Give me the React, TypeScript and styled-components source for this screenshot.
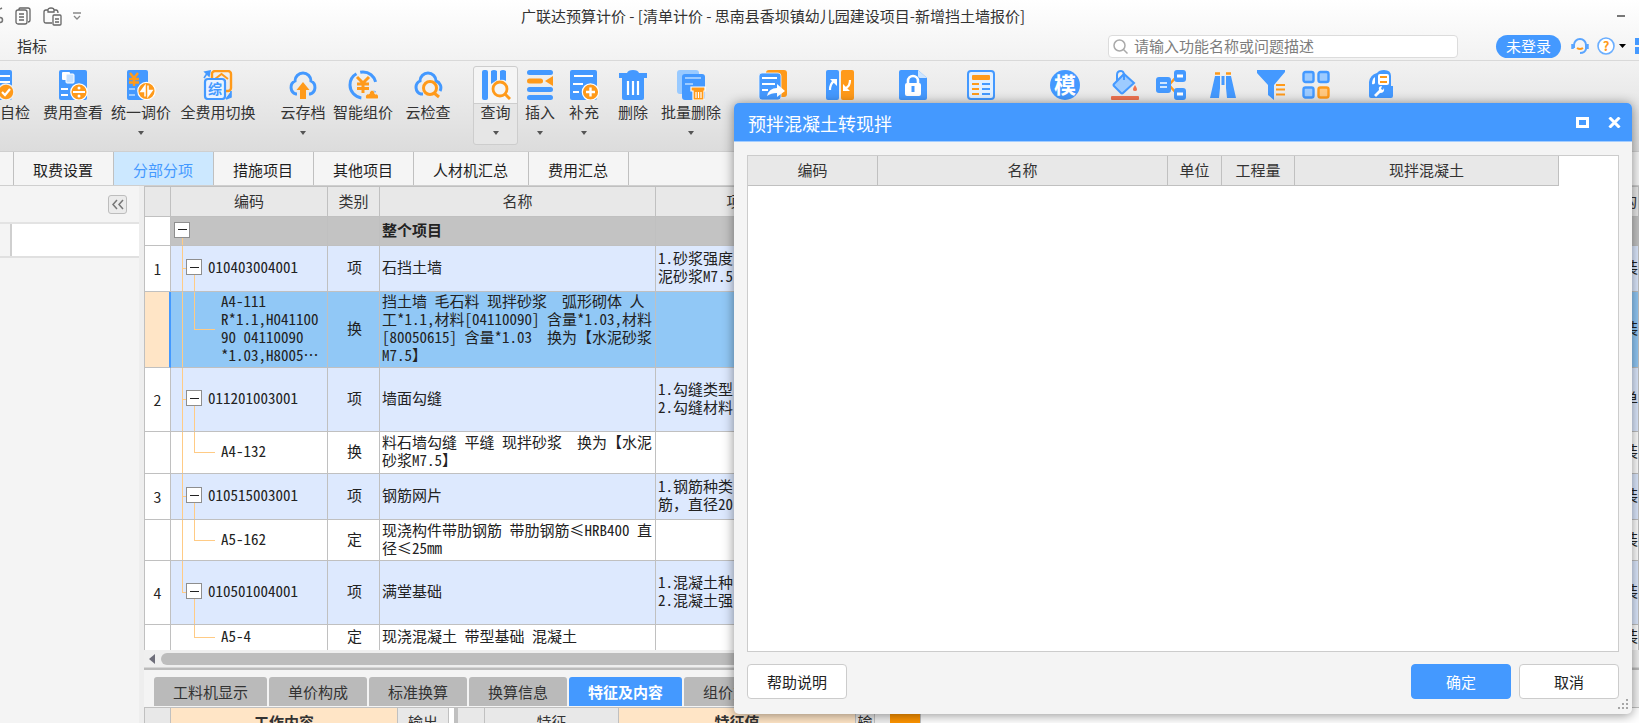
import React from "react";
import styled, { createGlobalStyle, css } from "styled-components";

const BLUE = "#4499ff";
const ORANGE = "#ff9a1a";
const LINE = "#c0c0c0";
const TREE = "#ffcb85";

const GlobalStyle = createGlobalStyle`
  * { box-sizing: border-box; }
  body {
    margin: 0;
    background: #f4f4f4;
    color: #333;
    font-family: "Noto Sans CJK SC", "Liberation Sans", sans-serif;
    font-size: 15px;
    line-height: 20px;
  }
  button, input { font: inherit; color: inherit; }
  button { padding: 0; margin: 0; border: 0; background: none; white-space: nowrap; }
`;

/* ---------- window frame ---------- */

const Window = styled.div`
  position: relative;
  display: flex;
  flex-direction: column;
  height: 100vh;
  overflow: hidden;
`;

const TopArea = styled.header`
  flex: none;
  background: linear-gradient(#ffffff, #f2f2f2);
  border-bottom: 1px solid #d9d9d9;
`;

const TitleRow = styled.div`
  display: flex;
  align-items: center;
  height: 32px;
`;

const QuickTools = styled.div`
  display: flex;
  align-items: center;
  gap: 11px;
  width: 90px;
`;

const PlainButton = styled.button`
  display: flex;
  flex: none;
`;

const WindowTitle = styled.h1`
  flex: 1;
  margin: 0;
  font-size: 15px;
  font-weight: 400;
  text-align: center;
  white-space: nowrap;
`;

const WindowButtons = styled.div`
  display: flex;
  justify-content: flex-end;
  width: 183px;
  padding-right: 14px;
`;

const MenuRow = styled.div`
  display: flex;
  align-items: center;
  height: 28px;
  padding-left: 17px;
`;

const MenuLink = styled.a`
  margin-right: auto;
  color: #333;
  text-decoration: none;
`;

const SearchBox = styled.label`
  display: flex;
  align-items: center;
  gap: 6px;
  width: 350px;
  height: 23px;
  margin-right: 38px;
  padding: 0 4px;
  background: #fff;
  border: 1px solid #dcdcdc;
  border-radius: 4px;
`;

const SearchInput = styled.input`
  flex: 1;
  min-width: 0;
  height: 20px;
  padding: 0;
  border: 0;
  outline: 0;
  background: none;
  &::placeholder { color: #7d7d7d; opacity: 1; }
`;

const LoginButton = styled.button`
  width: 65px;
  height: 23px;
  margin-right: 10px;
  border-radius: 12px;
  background: ${BLUE};
  color: #fff;
`;

const HelpTools = styled.div`
  display: flex;
  align-items: center;
  gap: 8px;
  width: 68px;
  overflow: hidden;
`;

const HelpMenu = styled.svg`
  flex: none;
  margin-left: -4px;
`;

/* ---------- ribbon ---------- */

const Ribbon = styled.nav`
  display: flex;
  flex: none;
  align-items: flex-start;
  height: 91px;
  padding-top: 5px;
  overflow: hidden;
  background: linear-gradient(#f2f2f2, #dcdcdc);
  border-bottom: 1px solid #cfcfcf;
`;

const RibbonButton = styled.button<{ $width: number; $before: number; $framed?: boolean }>`
  display: flex;
  flex: none;
  flex-direction: column;
  align-items: center;
  width: ${(p) => p.$width}px;
  height: 79px;
  margin-left: ${(p) => p.$before}px;
  border: 1px solid transparent;
  border-radius: 3px;
  ${(p) =>
    p.$framed &&
    css`
      border-color: #cdcdcd;
      background: linear-gradient(#f5f5f5 36px, #cdcdcd 36px, #cdcdcd 37px, #e6e6e6 37px);
    `}
`;

const RibbonIcon = styled.svg`
  flex: none;
  width: 30px;
  height: 30px;
  margin: 3px 0 2px;
`;

const Caret = styled.span`
  margin-top: 9px;
  border: 3px solid transparent;
  border-top: 4px solid #555;
  border-bottom: 0;
`;

/* ---------- page tabs ---------- */

const PageTabs = styled.div`
  display: flex;
  flex: none;
  height: 34px;
  background: #f5f5f5;
  border-bottom: 1px solid #cfcfcf;
`;

const PageTab = styled.button<{ $active?: boolean }>`
  padding: 2px 20px 0 19px;
  border-right: 1px solid ${LINE};
  background: ${(p) => (p.$active ? "#cce8ff" : "#f5f5f5")};
  color: ${(p) => (p.$active ? BLUE : "#1e1e1e")};
`;

const TabEdge = styled.div`
  width: 14px;
  border-right: 1px solid ${LINE};
`;

/* ---------- body ---------- */

const Workspace = styled.div`
  display: flex;
  flex: 1;
  min-height: 0;
`;

const SidePanel = styled.aside`
  flex: none;
  width: 144px;
  padding-right: 5px;
  background: linear-gradient(90deg, #f4f4f4 139px, #eeeeee 139px);
`;

const SideHead = styled.div`
  display: flex;
  justify-content: flex-end;
  height: 36px;
  padding: 9px 12px 0 0;
`;

const CollapseButton = styled.button`
  display: flex;
  align-items: center;
  justify-content: center;
  width: 19px;
  height: 19px;
  border: 1px solid #bdbdbd;
  border-radius: 3px;
  background: #ebebeb;
`;

const SideRow = styled.div`
  height: 36px;
  border-top: 2px solid #e3e3e3;
  border-bottom: 2px solid #e0e0e0;
  background: linear-gradient(90deg, #f4f4f4 10px, #cfcfcf 10px, #cfcfcf 12px, #ffffff 12px);
`;

const Main = styled.main`
  display: flex;
  flex: 1;
  flex-direction: column;
  min-width: 0;
`;

const Grid = styled.table`
  width: 100%;
  table-layout: fixed;
  border-collapse: separate;
  border-spacing: 0;
  border-top: 1px solid ${LINE};
  border-left: 1px solid ${LINE};
`;

const Th = styled.th<{ $strong?: boolean }>`
  height: 30px;
  padding: 0 0 1px;
  overflow: hidden;
  background: ${(p) => (p.$strong ? "#ffe5c6" : "#e8e8e8")};
  border-right: 1px solid ${LINE};
  border-bottom: 1px solid ${LINE};
  font-weight: ${(p) => (p.$strong ? 700 : 400)};
  white-space: nowrap;
`;

type Kind = "group" | "item" | "selected" | "sub";
const rowColor: Record<Kind, string> = {
  group: "#c3c3c3",
  item: "#dde9fe",
  selected: "#91c8f6",
  sub: "#ffffff",
};

const Row = styled.tr<{ $height: number; $kind: Kind; $last?: boolean }>`
  height: ${(p) => p.$height}px;
  background: ${(p) => rowColor[p.$kind]};
  td { border-bottom: ${(p) => (p.$last ? "0" : `1px solid ${LINE}`)}; }
`;

const Td = styled.td<{ $center?: boolean; $bold?: boolean }>`
  padding: 0 0 3px 2px;
  overflow: hidden;
  border-right: 1px solid ${LINE};
  color: #222;
  font-feature-settings: "hwid";
  font-weight: ${(p) => (p.$bold ? 700 : 400)};
  line-height: 18px;
  text-align: ${(p) => (p.$center ? "center" : "left")};
  white-space: pre;
`;

const FullWidth = styled.span`
  font-feature-settings: normal;
`;

const NumberCell = styled(Td)<{ $current?: boolean }>`
  padding: 0;
  background: ${(p) => (p.$current ? "#ffe5c6" : "#ffffff")};
  ${(p) => p.$current && css`border-right: 2px solid ${BLUE};`}
  font-feature-settings: normal;
  font-size: 14px;
  text-align: center;
`;

type Branch = "root" | "node" | "lastNode" | "leaf" | "lastLeaf";
const ink = `linear-gradient(${TREE}, ${TREE})`;
const trunk = `${ink} 11px 0 / 1px 100% no-repeat`;
const branchLines: Record<Branch, string> = {
  root: `${ink} 11px 100% / 1px 50% no-repeat`,
  node: `${trunk}, ${ink} 11px 50% / 6px 1px no-repeat, ${ink} 23px 100% / 1px 50% no-repeat`,
  lastNode: `${ink} 11px 0 / 1px 50% no-repeat, ${ink} 11px 50% / 6px 1px no-repeat, ${ink} 23px 100% / 1px 50% no-repeat`,
  leaf: `${trunk}, ${ink} 23px 0 / 1px 50% no-repeat, ${ink} 23px 50% / 21px 1px no-repeat`,
  lastLeaf: `${ink} 23px 0 / 1px 50% no-repeat, ${ink} 23px 50% / 21px 1px no-repeat`,
};
const indent: Record<Branch, number> = { root: 3, node: 15, lastNode: 15, leaf: 50, lastLeaf: 50 };

const TreeCell = styled(Td)<{ $branch: Branch }>`
  padding-left: ${(p) => indent[p.$branch]}px;
  background: ${(p) => branchLines[p.$branch]};
`;

const TreeContent = styled.div`
  display: flex;
  align-items: center;
  gap: 6px;
`;

const Toggle = styled.button`
  display: flex;
  flex: none;
  align-items: center;
  justify-content: center;
  width: 16px;
  height: 16px;
  border: 1px solid #8e8e8e;
  background: #fff;
  &::before { content: ""; width: 9px; height: 1px; background: #222; }
`;

const ScrollBar = styled.div`
  display: flex;
  flex: none;
  align-items: center;
  gap: 6px;
  height: 18px;
  padding: 0 20px 0 5px;
  background: #efefef;
  border-bottom: 1px solid #d6d6d6;
`;

const ArrowLeft = styled.span`
  border: 5px solid transparent;
  border-right: 6px solid #6e6e7a;
  border-left: 0;
`;

const Thumb = styled.div`
  flex: 1;
  height: 12px;
  border-radius: 6px;
  background: #bdbdbd;
`;

const DetailTabs = styled.div`
  display: flex;
  flex: none;
  gap: 2px;
  height: 40px;
  padding: 7px 0 1px 10px;
  border-top: 2px solid #bbbbbb;
  border-bottom: 1px solid ${LINE};
  background: #f4f4f4;
`;

const DetailTab = styled.button<{ $active?: boolean }>`
  padding: 0 19px;
  border-radius: 3px 3px 0 0;
  background: ${(p) => (p.$active ? BLUE : "#bababa")};
  color: ${(p) => (p.$active ? "#fff" : "#333")};
  font-weight: ${(p) => (p.$active ? 700 : 400)};
`;

const DetailPanes = styled.div`
  display: flex;
  flex: 1;
  min-height: 0;
  overflow: hidden;
  background: #fff;
`;

const DetailTable = styled.table<{ $width: number }>`
  flex: none;
  width: ${(p) => p.$width}px;
  height: 30px;
  table-layout: fixed;
  border-collapse: separate;
  border-spacing: 0;
  border-left: 1px solid ${LINE};
`;

const Splitter = styled.div`
  width: 8px;
  background: #fff;
  border-right: 3px solid ${LINE};
`;

const DetailMark = styled.div`
  width: 46px;
  border-left: 15px solid #f0f0f0;
  border-right: 1px solid ${LINE};
  background: #ff9500;
`;

/* ---------- dialog ---------- */

const Dialog = styled.section`
  position: absolute;
  top: 103px;
  right: 7px;
  bottom: 9px;
  left: 734px;
  display: flex;
  flex-direction: column;
  border-radius: 5px;
  background: #f4f4f4;
  box-shadow: 0 1px 12px rgba(0, 0, 0, 0.45);
`;

const DialogHead = styled.div`
  display: flex;
  flex: none;
  align-items: center;
  gap: 19px;
  height: 39px;
  padding: 0 11px 0 14px;
  border-radius: 5px 5px 0 0;
  border-bottom: 1px solid #a3cdff;
  background: ${BLUE};
  color: #fff;
`;

const DialogTitle = styled.h2`
  flex: 1;
  margin: 2px 0 0;
  font-size: 18px;
  font-weight: 400;
  line-height: 24px;
`;

const DialogBody = styled.div`
  display: flex;
  flex: 1;
  flex-direction: column;
  gap: 12px;
  min-height: 0;
  padding: 13px 13px 15px;
`;

const Frame = styled.div`
  flex: 1;
  min-height: 0;
  border: 1px solid #cccccc;
  background: #fff;
`;

const DialogTable = styled.table`
  width: 811px;
  table-layout: fixed;
  border-collapse: separate;
  border-spacing: 0;
`;

const DialogFoot = styled.div`
  display: flex;
  flex: none;
  gap: 8px;
`;

const DialogButton = styled.button<{ $primary?: boolean; $start?: boolean }>`
  width: 100px;
  height: 35px;
  margin-right: ${(p) => (p.$start ? "auto" : "0")};
  border: 1px solid ${(p) => (p.$primary ? BLUE : "#cccccc")};
  border-radius: 4px;
  background: ${(p) => (p.$primary ? BLUE : "#ffffff")};
  color: ${(p) => (p.$primary ? "#fff" : "#222")};
`;

const Grip = styled.svg`
  position: absolute;
  right: 3px;
  bottom: 4px;
`;

/* ---------- ribbon drawings ---------- */

const glyph = { fontFamily: '"Noto Sans CJK SC", sans-serif', fontWeight: 700, textAnchor: "middle" as const };

const icons: Record<string, React.ReactNode> = {
  selfCheck: (
    <>
      <rect x="1" width="26" height="30" rx="2" fill={BLUE} />
      <path d="M13 6h12M13 12h12" stroke="#fff" strokeWidth="2" />
      <circle cx="21" cy="22" r="8" fill={ORANGE} stroke="#f0f0f0" strokeWidth="1.5" />
      <path d="M17 22l3 3 5-6" fill="none" stroke="#fff" strokeWidth="2.2" />
    </>
  ),
  feeView: (
    <>
      <rect x="1" width="28" height="30" rx="2" fill={BLUE} />
      <rect x="4" y="2" width="8" height="8" rx="1" fill="#fff" />
      <rect x="8" y="4" width="8" height="9" rx="1" fill="#c4e0ff" stroke="#fff" />
      <path d="M3 19h7M3 25h7" stroke="#fff" strokeWidth="2" />
      <circle cx="21" cy="22" r="8.2" fill={ORANGE} stroke="#fff" strokeWidth="1.2" />
      <path d="M15 22h12" stroke="#fff" strokeWidth="2" />
      <circle cx="21" cy="18" r="1.5" fill="#fff" />
      <circle cx="21" cy="26" r="1.5" fill="#fff" />
    </>
  ),
  price: (
    <>
      <rect x="1" width="21" height="30" rx="2" fill={BLUE} />
      <path d="M4 3l4 5 4-5M8 8v8M3 9h10M3 12.500h10" fill="none" stroke={ORANGE} strokeWidth="2.400" />
      <path d="M3 19h6M3 25h6" stroke="#9dcbff" strokeWidth="2" />
      <circle cx="20.500" cy="21" r="8.700" fill={ORANGE} stroke="#fff" strokeWidth="1.200" />
      <path d="M19 15.500v11M19 16l-4 5.500h4zM22 15.500v11M22 26l4-5.500h-4z" stroke="#fff" strokeWidth="1.500" fill="#fff" />
    </>
  ),
  fullFee: (
    <>
      <rect x="9" y="1" width="19" height="20" rx="3" fill="none" stroke={ORANGE} strokeWidth="2.400" />
      <path d="M12 9l6.500-5L25 9M14 11h9M18.500 11v8" fill="none" stroke={ORANGE} strokeWidth="2" />
      <rect x="2" y="9" width="20" height="20" rx="3" fill="#eaf3ff" stroke={BLUE} strokeWidth="2.200" />
      <text x="12" y="24" fontSize="14" fill={BLUE} {...glyph}>综</text>
      <path d="M1 8l4-6M2 2l5-1-1 5zM23 29l5-6M28 21v6l-5 2" stroke={BLUE} strokeWidth="1.600" fill={BLUE} />
    </>
  ),
  cloudSave: (
    <>
      <path d="M9 25H8a7 7 0 0 1-1-13 8 8 0 0 1 16 0 7 7 0 0 1-1 13h-1" fill="none" stroke={BLUE} strokeWidth="3" transform="translate(0 -1)" />
      <path d="M15 12l6.500 8H18v9h-6v-9H8.500z" fill={ORANGE} />
    </>
  ),
  smartPrice: (
    <>
      <circle cx="15" cy="15" r="13" fill="none" stroke={BLUE} strokeWidth="3" strokeDasharray="0 6 10 6 32 4 20 4" />
      <path d="M9 7l6 6 6-6M15 13v10M9 14h12M9 18.500h12" fill="none" stroke={ORANGE} strokeWidth="3" />
      <path d="M18 29c-2-3 1-6 3-5 1-6 6-4 6 0 4-1 4 4 3 5z" fill={ORANGE} stroke="#f0f0f0" />
    </>
  ),
  cloudCheck: (
    <>
      <path d="M10 25H8a7 7 0 0 1-1-13 8 8 0 0 1 16 0 7 7 0 0 1 4 10" fill="none" stroke={BLUE} strokeWidth="3" transform="translate(0 -1)" />
      <circle cx="17" cy="18" r="6.500" fill="#f0f0f0" stroke={ORANGE} strokeWidth="3" />
      <path d="M21 23l5 4" stroke={ORANGE} strokeWidth="3" />
    </>
  ),
  query: (
    <>
      <rect x="1" width="6" height="30" rx="2" fill={BLUE} />
      <path d="M10 1q3-2 6 0v9l-6 4zM19 1q3-2 6 0v10q-3-2-6-1z" fill={BLUE} />
      <circle cx="19" cy="19" r="7" fill="#f5f5f5" stroke={ORANGE} strokeWidth="2.800" />
      <path d="M24 24l5 5" stroke={ORANGE} strokeWidth="3" />
    </>
  ),
  insert: (
    <>
      <path d="M4.500 2.500h21M4.500 19.500h21M4.500 27.500h21" stroke={BLUE} strokeWidth="5" strokeLinecap="round" />
      <path d="M4.500 11h11" stroke={ORANGE} strokeWidth="5" strokeLinecap="round" />
      <path d="M20 11l8-5v10z" fill={ORANGE} />
    </>
  ),
  supplement: (
    <>
      <rect x="1" width="27" height="30" rx="2" fill={BLUE} />
      <path d="M5 6h19M4 14h10M4 22h6" stroke="#fff" strokeWidth="2" />
      <circle cx="21.500" cy="22" r="8.200" fill={ORANGE} stroke="#fff" strokeWidth="1.200" />
      <path d="M17 22h9M21.500 17.500v9" stroke="#fff" strokeWidth="2.400" />
    </>
  ),
  trash: (
    <>
      <path d="M1 3h8q1-3 6-3t6 3h8v5H1z" fill={BLUE} />
      <path d="M4 7h22v21q0 2-2 2H6q-2 0-2-2z" fill={BLUE} />
      <path d="M10 11v14M15 11v14M20 11v14" stroke="#fff" strokeWidth="2.200" />
    </>
  ),
  batchTrash: (
    <>
      <rect x="1" width="22" height="24" rx="3" fill="#99caff" />
      <rect x="6" y="4" width="23" height="26" rx="3" fill={BLUE} />
      <path d="M9 8h16M9 14h8" stroke="#9dcbff" strokeWidth="2" />
      <path d="M15 17h14v4h-1v9H17v-9h-2z" fill={ORANGE} stroke="#fff" strokeWidth="1.200" />
      <path d="M20 22v6M22.500 22v6M25 22v6" stroke="#fff" strokeWidth="1.200" />
    </>
  ),
  share: (
    <>
      <rect x="8" width="21" height="27" rx="3" fill={ORANGE} />
      <rect x="1" y="3" width="22" height="27" rx="3" fill={BLUE} stroke="#e9f3ff" strokeWidth="0.800" />
      <path d="M4 8h15M4 14h13M4 20h6" stroke="#fff" strokeWidth="2" />
      <path d="M9 26q2-8 10-8v-4l8 7-8 6v-4q-6 0-10 3z" fill="#fff" />
    </>
  ),
  swap: (
    <>
      <rect x="1" width="13" height="30" rx="2" fill={BLUE} />
      <rect x="16" width="13" height="30" rx="2" fill={ORANGE} />
      <path d="M5 20q0-6 4-9M25 10q0 6-4 8" fill="none" stroke="#fff" strokeWidth="2.200" />
      <path d="M5 9h7v7zM18 14v7h7z" fill="#fff" />
    </>
  ),
  lock: (
    <>
      <path d="M1 2q0-2 2-2h17l9 8v20q0 2-2 2H3q-2 0-2-2z" fill={BLUE} />
      <path d="M20 0l9 8h-7q-2 0-2-2z" fill="#cfe6ff" />
      <path d="M10 14v-3a5 5 0 0 1 10 0v3" fill="none" stroke="#fff" strokeWidth="2.600" />
      <rect x="7" y="13" width="16" height="13" rx="2" fill="#fff" />
      <path d="M15 16v6" stroke={BLUE} strokeWidth="3" />
    </>
  ),
  sheet: (
    <>
      <rect x="2" y="1" width="26" height="28" rx="3" fill="#e2f0ff" stroke={BLUE} strokeWidth="2" />
      <rect x="6" y="5" width="18" height="5" rx="1" fill={ORANGE} />
      <path d="M6 14h7M6 19h7M6 24h7" stroke={ORANGE} strokeWidth="2.200" />
      <path d="M16 14h8M16 19h8M16 24h8" stroke={BLUE} strokeWidth="2.200" />
    </>
  ),
  mould: (
    <>
      <circle cx="15" cy="15" r="15" fill={BLUE} />
      <text x="15" y="23" fontSize="22" fill="#fff" {...glyph}>模</text>
    </>
  ),
  bucket: (
    <>
      <path d="M4 14L14 4l10 9-11 10q-1 1-2 0l-7-7q-1-1 0-2z" fill="#9dcbff" stroke={BLUE} strokeWidth="2" />
      <path d="M7 11V5q0-4 4-4 3 0 3 5v4" fill="none" stroke={BLUE} strokeWidth="2" />
      <path d="M25 15q4 6 0 6t0-6z" fill="#ef7350" />
      <rect x="1" y="26" width="28" height="4" rx="1" fill="#ef7350" />
    </>
  ),
  tree: (
    <>
      <path d="M13 15l8-9M13 15l8 9" stroke={ORANGE} strokeWidth="2.400" />
      <rect x="0" y="7" width="15" height="16" rx="3" fill={BLUE} />
      <path d="M4 13h7M4 17h7" stroke="#cfe6ff" strokeWidth="2" />
      <rect x="18" width="12" height="12" rx="3" fill={BLUE} />
      <rect x="18" y="18" width="12" height="12" rx="3" fill={BLUE} />
      <path d="M21 6h6M21 24h6" stroke="#fff" strokeWidth="3" />
    </>
  ),
  binoculars: (
    <>
      <path d="M7 6h5v12l-1 10H2zM18 6h5l5 22h-9l-1-10z" fill={BLUE} />
      <path d="M13.500 6h3v9h-3z" fill={BLUE} />
      <path d="M7 3.500h5M18 3.500h5" stroke={ORANGE} strokeWidth="2.600" />
    </>
  ),
  funnel: (
    <>
      <path d="M1 0h28v2L18 15v15l-6-5V15L1 3z" fill={BLUE} />
      <path d="M20 15h9M20 19.500h9M20 24.500h9" stroke={ORANGE} strokeWidth="2" />
    </>
  ),
  squares: (
    <>
      <g fill="#9dcbff" stroke={BLUE} strokeWidth="2.400">
        <rect x="2.500" y="2" width="10" height="10" rx="2" />
        <rect x="17.500" y="2" width="10" height="10" rx="2" />
        <rect x="2.500" y="17.500" width="10" height="10" rx="2" />
      </g>
      <rect x="17.500" y="17.500" width="10" height="10" rx="2" fill="#ffc880" stroke={ORANGE} strokeWidth="2.400" />
    </>
  ),
  toolbox: (
    <>
      <path d="M3 28V12Q4 5 11 3q2-3 7-3 7 0 7 6v10h2v10q0 2-2 2H5q-2 0-2-2z" fill={BLUE} />
      <rect x="12" y="4" width="11" height="11" rx="2" fill="#fff" />
      <path d="M14 7h7M14 12h7" stroke={ORANGE} strokeWidth="2.200" />
      <path d="M9 7v6q-1 2-3 1 0-5 3-7z" fill="#fff" />
      <path d="M8 25l5-5q-1-4 3-4l-1 3 2 1 1-2q1 5-4 5l-4 4z" fill="#fff" />
    </>
  ),
};

interface Command { icon: string; label?: string; width: number; before: number; menu?: boolean; framed?: boolean }
const commands: Command[] = [
  { icon: "selfCheck", label: "项目自检", width: 68, before: -34 },
  { icon: "feeView", label: "费用查看", width: 68, before: 5 },
  { icon: "price", label: "统一调价", width: 68, before: 0, menu: true },
  { icon: "fullFee", label: "全费用切换", width: 84, before: 1 },
  { icon: "cloudSave", label: "云存档", width: 52, before: 17, menu: true },
  { icon: "smartPrice", label: "智能组价", width: 68, before: 0 },
  { icon: "cloudCheck", label: "云检查", width: 52, before: 5 },
  { icon: "query", label: "查询", width: 45, before: 19, menu: true, framed: true },
  { icon: "insert", label: "插入", width: 40, before: 2, menu: true },
  { icon: "supplement", label: "补充", width: 40, before: 4, menu: true },
  { icon: "trash", label: "删除", width: 40, before: 9 },
  { icon: "batchTrash", label: "批量删除", width: 68, before: 4, menu: true },
  { icon: "share", width: 36, before: 30 },
  { icon: "swap", width: 36, before: 31 },
  { icon: "lock", width: 36, before: 37 },
  { icon: "sheet", width: 36, before: 32 },
  { icon: "mould", width: 36, before: 48 },
  { icon: "bucket", width: 36, before: 24 },
  { icon: "tree", width: 36, before: 10 },
  { icon: "binoculars", width: 36, before: 16 },
  { icon: "funnel", width: 36, before: 12 },
  { icon: "squares", width: 36, before: 9 },
  { icon: "toolbox", width: 36, before: 29 },
];

/* ---------- data ---------- */

interface Line { no?: string; kind: Kind; branch: Branch; code: string; type: string; name: string; feature?: React.ReactNode; extra: string; height: number }
const lines: Line[] = [
  { kind: "group", branch: "root", code: "", type: "", name: "整个项目", extra: "", height: 29 },
  { no: "1", kind: "item", branch: "node", code: "010403004001", type: "项", name: "石挡土墙", feature: "1.砂浆强度\n泥砂浆M7.5", extra: "装", height: 46 },
  { kind: "selected", branch: "leaf", code: "A4-111\nR*1.1,H041100\n90 04110090\n*1.03,H8005…", type: "换", name: "挡土墙 毛石料 现拌砂浆  弧形砌体 人\n工*1.1,材料[04110090] 含量*1.03,材料\n[80050615] 含量*1.03  换为【水泥砂浆\nM7.5】", extra: "装", height: 76 },
  { no: "2", kind: "item", branch: "node", code: "011201003001", type: "项", name: "墙面勾缝", feature: "1.勾缝类型\n2.勾缝材料", extra: "单", height: 64 },
  { kind: "sub", branch: "leaf", code: "A4-132", type: "换", name: "料石墙勾缝 平缝 现拌砂浆  换为【水泥\n砂浆M7.5】", extra: "装", height: 42 },
  { no: "3", kind: "item", branch: "node", code: "010515003001", type: "项", name: "钢筋网片", feature: <>{"1.钢筋种类\n筋"}<FullWidth>，</FullWidth>直径20</>, extra: "装", height: 46 },
  { kind: "sub", branch: "leaf", code: "A5-162", type: "定", name: "现浇构件带肋钢筋 带肋钢筋≤HRB400 直\n径≤25mm", extra: "装", height: 41 },
  { no: "4", kind: "item", branch: "lastNode", code: "010501004001", type: "项", name: "满堂基础", feature: "1.混凝土种\n2.混凝土强", extra: "装", height: 64 },
  { kind: "sub", branch: "lastLeaf", code: "A5-4", type: "定", name: "现浇混凝土 带型基础 混凝土", extra: "装", height: 25 },
];

const BillGrid = () => (
  <Grid>
    <colgroup>
      <col width="26" /><col width="157" /><col width="52" /><col width="276" /><col width="202" /><col /><col width="18" />
    </colgroup>
    <thead>
      <tr>
        <Th /><Th>编码</Th><Th>类别</Th><Th>名称</Th><Th>项目特征</Th><Th /><Th>构</Th>
      </tr>
    </thead>
    <tbody>
      {lines.map((l, i) => (
        <Row key={i} $height={l.height} $kind={l.kind} $last={i === lines.length - 1}>
          <NumberCell $current={l.kind === "selected"}>{l.no}</NumberCell>
          <TreeCell $branch={l.branch}>
            <TreeContent>
              {!l.branch.toLowerCase().endsWith("leaf") && <Toggle aria-label="折叠" />}
              {l.code}
            </TreeContent>
          </TreeCell>
          <Td $center>{l.type}</Td>
          <Td $bold={l.kind === "group"}>{l.name}</Td>
          <Td>{l.feature}</Td>
          <Td />
          <Td>{l.extra}</Td>
        </Row>
      ))}
    </tbody>
  </Grid>
);

const ConvertDialog = () => (
  <Dialog role="dialog" aria-labelledby="dialog-title">
    <DialogHead>
      <DialogTitle id="dialog-title">预拌混凝土转现拌</DialogTitle>
      <PlainButton aria-label="最大化">
        <svg width="13" height="11"><rect x="1.500" y="1.500" width="10" height="8" fill="none" stroke="#fff" strokeWidth="3" /></svg>
      </PlainButton>
      <PlainButton aria-label="关闭">
        <svg width="13" height="11"><path d="M1.500 0.500l10 10M11.500 0.500l-10 10" stroke="#fff" strokeWidth="3" /></svg>
      </PlainButton>
    </DialogHead>
    <DialogBody>
      <Frame>
        <DialogTable>
          <colgroup>
            <col width="130" /><col width="290" /><col width="54" /><col width="73" /><col width="264" />
          </colgroup>
          <thead>
            <tr><Th>编码</Th><Th>名称</Th><Th>单位</Th><Th>工程量</Th><Th>现拌混凝土</Th></tr>
          </thead>
        </DialogTable>
      </Frame>
      <DialogFoot>
        <DialogButton $start>帮助说明</DialogButton>
        <DialogButton $primary>确定</DialogButton>
        <DialogButton>取消</DialogButton>
      </DialogFoot>
    </DialogBody>
    <Grip width="11" height="11" fill="#a6a6a6">
      <path d="M8 0h2v2H8zM8 4h2v2H8zM8 8h2v2H8zM4 4h2v2H4zM4 8h2v2H4zM0 8h2v2H0z" />
    </Grip>
  </Dialog>
);

export default function App() {
  return (
    <Window lang="zh-CN">
      <GlobalStyle />
      <TopArea>
        <TitleRow>
          <QuickTools>
            <PlainButton aria-label="剪切">
              <svg width="4" height="20" fill="none" stroke="#777" strokeWidth="1.500"><path d="M0 3l2-1" /><circle cx="0" cy="14" r="2.500" /></svg>
            </PlainButton>
            <PlainButton aria-label="复制">
              <svg width="17" height="18" viewBox="0 0 17 18" fill="none" stroke="#666" strokeWidth="1.300">
                <path d="M4 3V2q0-1 1-1h8q2 0 2 2v10q0 2-2 2" /><rect x="1" y="3" width="11" height="14" rx="2" /><path d="M4 7h5M4 10h5M4 13h5" />
              </svg>
            </PlainButton>
            <PlainButton aria-label="粘贴">
              <svg width="19" height="19" viewBox="0 0 19 19" fill="none" stroke="#666" strokeWidth="1.300">
                <path d="M9 16H3q-2 0-2-2V5q0-2 2-2h2q0-2 3-2t3 2h2q2 0 2 3M5 3v2h6V3" /><rect x="10" y="8" width="8" height="10" rx="1" /><path d="M12 12h4M12 15h4" />
              </svg>
            </PlainButton>
            <PlainButton aria-label="自定义">
              <svg width="8" height="9" fill="none" stroke="#888" strokeWidth="1.300"><path d="M0 1h8M1 4l3 3 3-3" /></svg>
            </PlainButton>
          </QuickTools>
          <WindowTitle>广联达预算计价 - [清单计价 - 思南县香坝镇幼儿园建设项目-新增挡土墙报价]</WindowTitle>
          <WindowButtons>
            <PlainButton aria-label="最小化"><svg width="8" height="3"><rect width="8" height="2" fill="#777" /></svg></PlainButton>
          </WindowButtons>
        </TitleRow>
        <MenuRow>
          <MenuLink href="#index">指标</MenuLink>
          <SearchBox>
            <svg width="15" height="15" fill="none" stroke="#aaa" strokeWidth="1.500"><circle cx="6.500" cy="6.500" r="5.500" /><path d="M10.500 10.500l4 4" /></svg>
            <SearchInput type="text" aria-label="搜索" placeholder="请输入功能名称或问题描述" />
          </SearchBox>
          <LoginButton>未登录</LoginButton>
          <HelpTools>
            <PlainButton aria-label="客服">
              <svg width="18" height="18" fill="none" stroke="#5aa5ff" strokeWidth="2">
                <path d="M3 11V8a6 6 0 0 1 12 0v4q-1 4-6 4" /><path d="M1.500 7v5M16.500 7v5" strokeWidth="2.500" /><path d="M6 11q3 2 6 0" stroke={ORANGE} />
              </svg>
            </PlainButton>
            <PlainButton aria-label="帮助">
              <svg width="18" height="18"><circle cx="9" cy="9" r="8" fill="#fff" stroke="#6aaeff" strokeWidth="1.600" /><text x="9" y="14" fontSize="13" fill={ORANGE} {...glyph}>?</text></svg>
            </PlainButton>
            <HelpMenu width="24" height="16"><path d="M0 6h7l-3.500 4z" fill="#000" /><path d="M16 0h8v7h-8zM16 9h8v7h-8z" fill={BLUE} /></HelpMenu>
          </HelpTools>
        </MenuRow>
      </TopArea>

      <Ribbon aria-label="功能区">
        {commands.map((c) => (
          <RibbonButton key={c.icon} $width={c.width} $before={c.before} $framed={c.framed} aria-label={c.label ?? c.icon}>
            <RibbonIcon viewBox="0 0 30 30">{icons[c.icon]}</RibbonIcon>
            {c.label}
            {c.menu && <Caret />}
          </RibbonButton>
        ))}
      </Ribbon>

      <PageTabs>
        <TabEdge />
        <PageTab>取费设置</PageTab>
        <PageTab $active>分部分项</PageTab>
        <PageTab>措施项目</PageTab>
        <PageTab>其他项目</PageTab>
        <PageTab>人材机汇总</PageTab>
        <PageTab>费用汇总</PageTab>
      </PageTabs>

      <Workspace>
        <SidePanel>
          <SideHead>
            <CollapseButton aria-label="收起">
              <svg width="13" height="11" fill="none" stroke="#777" strokeWidth="1.500"><path d="M6 1L2 5.500 6 10M12 1L8 5.500l4 4.500" /></svg>
            </CollapseButton>
          </SideHead>
          <SideRow />
        </SidePanel>
        <Main>
          <BillGrid />
          <ScrollBar><ArrowLeft /><Thumb /></ScrollBar>
          <DetailTabs>
            <DetailTab>工料机显示</DetailTab>
            <DetailTab>单价构成</DetailTab>
            <DetailTab>标准换算</DetailTab>
            <DetailTab>换算信息</DetailTab>
            <DetailTab $active>特征及内容</DetailTab>
            <DetailTab>组价方案</DetailTab>
          </DetailTabs>
          <DetailPanes>
            <DetailTable $width={305}>
              <colgroup><col width="26" /><col width="227" /><col width="51" /></colgroup>
              <thead><tr><Th /><Th $strong>工作内容</Th><Th>输出</Th></tr></thead>
            </DetailTable>
            <Splitter />
            <DetailTable $width={418}>
              <colgroup><col width="27" /><col width="134" /><col width="237" /><col width="19" /></colgroup>
              <thead><tr><Th /><Th>特征</Th><Th $strong>特征值</Th><Th>输</Th></tr></thead>
            </DetailTable>
            <DetailMark />
          </DetailPanes>
        </Main>
      </Workspace>
      <ConvertDialog />
    </Window>
  );
}
